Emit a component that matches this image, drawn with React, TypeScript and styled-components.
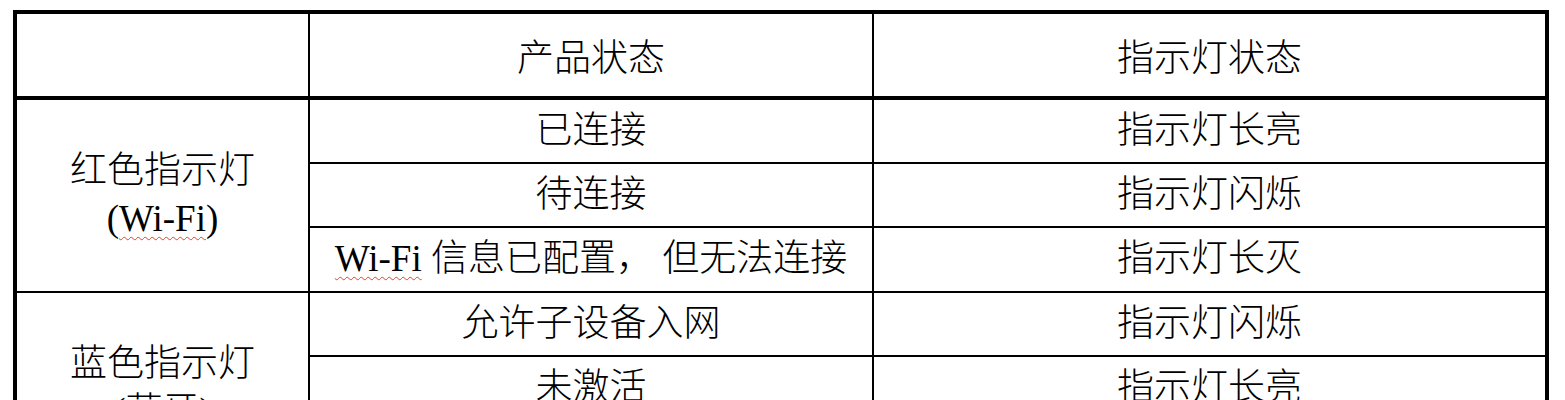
import React from 'react';
import { createGlobalStyle, styled } from 'styled-components';

const GlobalStyle = createGlobalStyle`
  html, body {
    margin: 0;
    background: #ffffff;
  }
  body {
    font-family: "Liberation Serif", "Noto Sans CJK SC", serif;
    color: #000000;
  }
`;

const Page = styled.div`
  padding: 10px 0 0 13px;
`;

const Table = styled.table`
  border-collapse: collapse;
  table-layout: fixed;
  width: 1536px;
  border: 4px solid #000;
  font-size: 37px;
  font-weight: 300;
`;

const HeadRow = styled.tr`
  height: 86px;
`;

const BodyRow = styled.tr`
  height: 64.5px;
`;

const HeadCell = styled.th`
  font-weight: 300;
  border-left: 2px solid #000;
  border-right: 2px solid #000;
  border-bottom: 4px solid #000;
  padding: 0;
  text-align: center;
  vertical-align: middle;
  white-space: nowrap;
`;

const Cell = styled.td`
  border: 2px solid #000;
  padding: 0;
  text-align: center;
  vertical-align: middle;
  white-space: nowrap;
  line-height: 1.2;
`;

const GroupCell = styled(Cell)`
  line-height: 48px;
`;

const Squiggle = styled.span`
  text-decoration: underline wavy #d9452c;
  text-decoration-thickness: 1px;
  text-underline-offset: 5px;
  text-decoration-skip-ink: none;
`;

type Row = { state: React.ReactNode; light: string };
type Group = { name: string; tag: React.ReactNode; rows: Row[] };

const wifi = <Squiggle>Wi-Fi</Squiggle>;

const groups: Group[] = [
  {
    name: '红色指示灯',
    tag: <>({wifi})</>,
    rows: [
      { state: '已连接', light: '指示灯长亮' },
      { state: '待连接', light: '指示灯闪烁' },
      { state: <>{wifi} 信息已配置， 但无法连接</>, light: '指示灯长灭' },
    ],
  },
  {
    name: '蓝色指示灯',
    tag: '(蓝牙)',
    rows: [
      { state: '允许子设备入网', light: '指示灯闪烁' },
      { state: '未激活', light: '指示灯长亮' },
      { state: '已激活', light: '指示灯长灭' },
    ],
  },
];

export default function App() {
  return (
    <Page>
      <GlobalStyle />
      <Table>
        <colgroup>
          <col style={{ width: 294 }} />
          <col style={{ width: 564 }} />
          <col style={{ width: 674 }} />
        </colgroup>
        <thead>
          <HeadRow>
            <HeadCell />
            <HeadCell>产品状态</HeadCell>
            <HeadCell>指示灯状态</HeadCell>
          </HeadRow>
        </thead>
        <tbody>
          {groups.map((group) =>
            group.rows.map((row, idx) => (
              <BodyRow key={group.name + idx}>
                {idx === 0 && (
                  <GroupCell rowSpan={group.rows.length}>
                    {group.name}
                    <br />
                    {group.tag}
                  </GroupCell>
                )}
                <Cell>{row.state}</Cell>
                <Cell>{row.light}</Cell>
              </BodyRow>
            ))
          )}
        </tbody>
      </Table>
    </Page>
  );
}
